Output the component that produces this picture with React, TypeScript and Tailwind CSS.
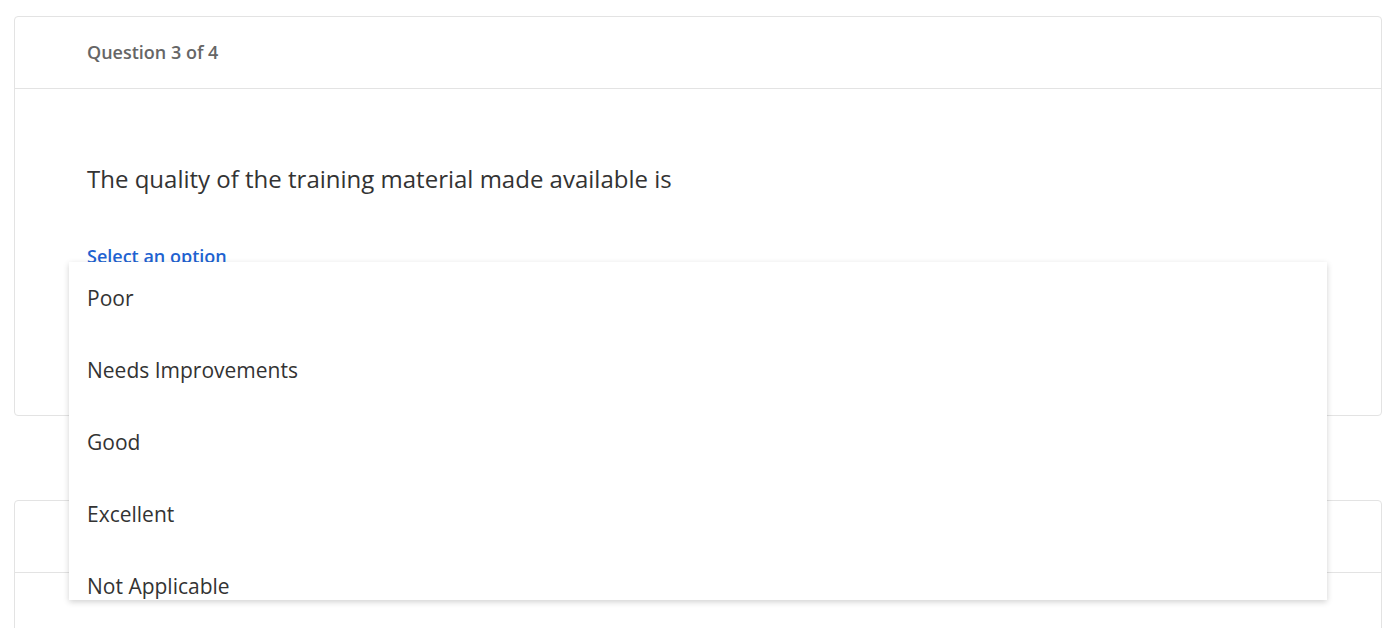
import React from 'react';

const options: string[] = ['Poor', 'Needs Improvements', 'Good', 'Excellent', 'Not Applicable'];

function QuestionCard({ label, children }: { label?: string; children?: React.ReactNode }) {
  return (
    <div className="rounded-[4px] border border-[#e3e3e3] bg-white">
      <div className="flex h-[72px] items-center border-b border-[#e3e3e3] px-[72px]">
        {label && <span className="text-[18px] font-semibold text-[#666666]">{label}</span>}
      </div>
      {children}
    </div>
  );
}

export default function App() {
  return (
    <div
      className="h-[628px] overflow-hidden bg-white pl-[14px] pr-[16px] pt-[16px]"
      style={{ fontFamily: '"Open Sans", "Noto Sans", sans-serif' }}
    >
      <QuestionCard label="Question 3 of 4">
        <div className="h-[326px] px-[72px] pt-[74px]">
          <p className="text-[24px] leading-[32px] text-[#333333]">
            The quality of the training material made available is
          </p>
          <div className="relative mt-[49px]">
            <div className="text-[18px] font-semibold leading-[24px] text-[#1f63d1]">Select an option</div>
            {/* open dropdown list */}
            <div className="absolute top-[18px] left-[-18px] right-[-18px] z-10 h-[338px] overflow-hidden bg-white shadow-[0_2px_6px_rgba(0,0,0,0.18)]">
              {options.map(o => (
                <div key={o} className="flex h-[72px] items-center px-[18px] pt-[1px] text-[21px] text-[#333333]">
                  {o}
                </div>
              ))}
            </div>
          </div>
        </div>
      </QuestionCard>

      {/* next question, header hidden behind the open list */}
      <div className="mt-[84px]">
        <QuestionCard>
          <div className="h-[200px]" />
        </QuestionCard>
      </div>
    </div>
  );
}
